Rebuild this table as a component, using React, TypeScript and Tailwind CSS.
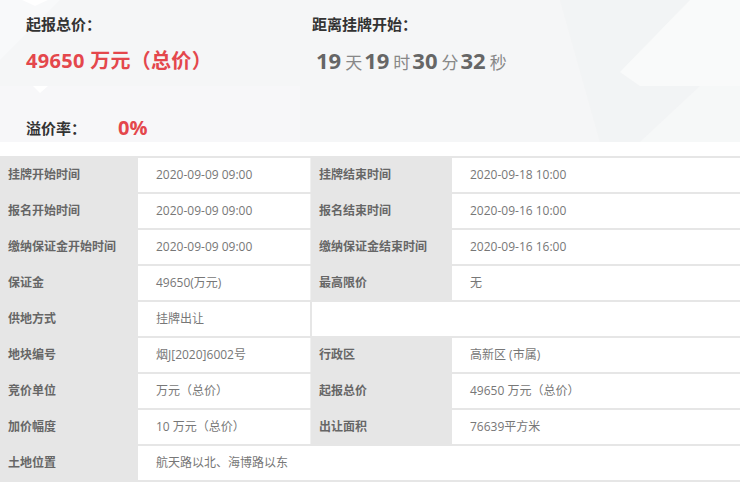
const font = { fontFamily: '"Open Sans", "Noto Sans CJK SC", sans-serif' };

type Cell = { label: string; value: string };
type Row = { left: Cell; right?: Cell; span?: boolean; emptyRight?: boolean };

const rows: Row[] = [
  { left: { label: '挂牌开始时间', value: '2020-09-09 09:00' }, right: { label: '挂牌结束时间', value: '2020-09-18 10:00' } },
  { left: { label: '报名开始时间', value: '2020-09-09 09:00' }, right: { label: '报名结束时间', value: '2020-09-16 10:00' } },
  { left: { label: '缴纳保证金开始时间', value: '2020-09-09 09:00' }, right: { label: '缴纳保证金结束时间', value: '2020-09-16 16:00' } },
  { left: { label: '保证金', value: '49650(万元)' }, right: { label: '最高限价', value: '无' } },
  { left: { label: '供地方式', value: '挂牌出让' }, emptyRight: true },
  { left: { label: '地块编号', value: '烟J[2020]6002号' }, right: { label: '行政区', value: '高新区 (市属)' } },
  { left: { label: '竞价单位', value: '万元（总价）' }, right: { label: '起报总价', value: '49650 万元（总价）' } },
  { left: { label: '加价幅度', value: '10 万元（总价）' }, right: { label: '出让面积', value: '76639平方米' } },
  { left: { label: '土地位置', value: '航天路以北、海博路以东' }, span: true },
];

function Label({ text, w }: { text: string; w: string }) {
  return (
    <div className={`${w} shrink-0 bg-[#e6e6e6] flex items-center pl-[8px] text-[12px] font-bold text-[#666]`}>
      {text}
    </div>
  );
}

function Value({ text, w }: { text: string; w: string }) {
  return (
    <div className={`${w} bg-white flex items-center pl-[18px] text-[12px] text-[#777]`}>{text}</div>
  );
}

function Countdown() {
  const parts: [string, string][] = [['19', '天'], ['19', '时'], ['30', '分'], ['32', '秒']];
  return (
    <div className="flex items-baseline mt-[17px] ml-[4px] leading-none">
      {parts.map(([n, u], i) => (
        <span key={i} className="flex items-baseline">
          <span className="text-[22px] font-bold text-[#666]">{n}</span>
          <span className="text-[17px] text-[#888] ml-[4px] mr-[2px]">{u}</span>
        </span>
      ))}
    </div>
  );
}

export default function App() {
  return (
    <div className="w-[740px] h-[484px] bg-white overflow-hidden" style={font}>
      {/* Header */}
      <div className="relative h-[142px] bg-[#f5f6f7] overflow-hidden">
        <svg className="absolute inset-0" width="740" height="142" viewBox="0 0 740 142">
          <polygon points="0,0 60,0 0,60" fill="#ffffff" opacity="0.35" />
          <polygon points="22,0 48,0 35,6" fill="#ffffff" opacity="0.9" />
          <polygon points="0,86 300,86 300,142 0,142" fill="#f8f9fa" opacity="0.6" />
          <polygon points="33,86 48,86 40,93" fill="#ffffff" />
          <polygon points="620,72 690,0 740,0 740,86 640,86" fill="#ffffff" opacity="0.85" />
          <polygon points="640,142 700,86 740,86 740,142" fill="#ffffff" opacity="0.5" />
          <polygon points="560,0 740,0 740,142 600,142" fill="#eceef0" opacity="0.25" />
        </svg>
        <div className="relative flex leading-none">
          <div className="w-[312px] pl-[26px]">
            <div className="pt-[17px] text-[15px] font-bold text-[#333]">起报总价：</div>
            <div className="mt-[19px] text-[20px] font-bold text-[#e4474c] tracking-[0.3px]">49650 万元（总价）</div>
          </div>
          <div>
            <div className="pt-[17px] text-[15px] font-bold text-[#333]">距离挂牌开始：</div>
            <Countdown />
          </div>
        </div>
        <div className="relative flex items-center h-[20px] pl-[26px] mt-[47px] leading-none">
          <span className="w-[92px] text-[15px] font-bold text-[#333]">溢价率：</span>
          <span className="text-[20px] font-bold text-[#e4474c]">0%</span>
        </div>
      </div>

      {/* Table */}
      <div className="mt-[14px] border-b-2 border-[#e6e6e6]">
        {rows.map((r, i) => (
          <div key={i} className="flex h-[36px] border-t-2 border-[#e6e6e6]">
            <Label text={r.left.label} w="w-[138px]" />
            {r.span ? (
              <Value text={r.left.value} w="flex-1" />
            ) : (
              <>
                <Value text={r.left.value} w="w-[172px]" />
                {r.emptyRight ? (
                  <div className="flex-1 border-l-2 border-[#e6e6e6] bg-white" />
                ) : (
                  <>
                    <div className="w-[1px] bg-[#f0f0f0]" />
                    <Label text={r.right!.label} w="w-[141px]" />
                    <Value text={r.right!.value} w="flex-1" />
                  </>
                )}
              </>
            )}
          </div>
        ))}
      </div>
    </div>
  );
}
